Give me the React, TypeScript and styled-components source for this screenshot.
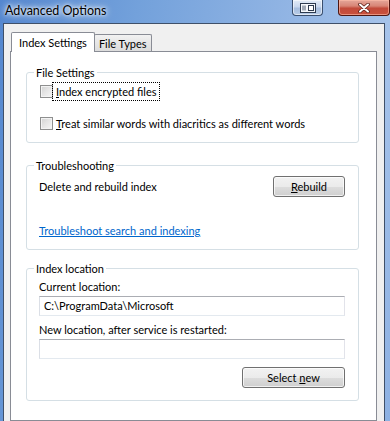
import React from "react";
import styled, { createGlobalStyle } from "styled-components";

const GlobalStyle = createGlobalStyle`
  html, body { margin: 0; padding: 0; overflow: hidden; }
  body {
    font-family: Lato, "Noto Sans", sans-serif;
    font-size: 11px;
    color: #000;
  }
`;

const Window = styled.div`
  width: 390px;
  height: 421px;
  overflow: hidden;
  display: flex;
  flex-direction: column;
  background: linear-gradient(100deg, #5487cf 0%, #73a1db 30%, #8fb3e3 60%, #a6c3ea 85%, #8cb0e2 100%);
`;

const TitleBar = styled.div`
  height: 23px;
  flex: none;
  display: flex;
  align-items: flex-start;
  padding-left: 5px;
`;

const Title = styled.div`
  flex: 1;
  line-height: 21px;
  font-size: 12.5px;
  color: #000;
  text-shadow: 0 0 6px #fff, 0 0 3px rgba(255, 255, 255, 0.9), 0 0 10px rgba(255, 255, 255, 0.7);
`;

const CaptionButtons = styled.div`
  display: flex;
  gap: 15px;
`;

const CaptionButton = styled.div<{ $close?: boolean }>`
  box-sizing: border-box;
  width: ${(p) => (p.$close ? 52 : 31)}px;
  height: 16px;
  display: flex;
  align-items: center;
  justify-content: center;
  border: 1px solid ${(p) => (p.$close ? "#4e1712" : "#3a4f6e")};
  border-top: none;
  border-radius: 0 0 4px 4px;
  background: ${(p) =>
    p.$close
      ? "linear-gradient(#e4a79a 0%, #d88576 40%, #c24a3a 55%, #c9513d 100%)"
      : "linear-gradient(#e2ebf7 0%, #c9d8ee 45%, #a8bfdf 55%, #b7cbe6 100%)"};
  box-shadow: inset 0 0 0 1px ${(p) => (p.$close ? "rgba(255,190,170,0.6)" : "rgba(255,255,255,0.55)")};
`;

const Client = styled.div`
  flex: 1;
  min-height: 0;
  margin: 0 5px 0 3px;
  border: 1px solid #3f5069;
  border-bottom: none;
  background: #f0f0f0;
  padding: 8px 0 0 6px;
  display: flex;
  flex-direction: column;
`;

const TabStrip = styled.div`
  display: flex;
  align-items: flex-end;
  height: 19px;
  padding-left: 1px;
  position: relative;
  z-index: 1;
`;

const Tab = styled.div<{ $active?: boolean }>`
  box-sizing: border-box;
  height: ${(p) => (p.$active ? 20 : 17)}px;
  margin-bottom: ${(p) => (p.$active ? -1 : 0)}px;
  margin-left: ${(p) => (p.$active ? 0 : -1)}px;
  padding: ${(p) => (p.$active ? "0 7px" : "0 4px")};
  border: 1px solid #898c95;
  border-bottom: none;
  border-radius: 2px 2px 0 0;
  background: ${(p) => (p.$active ? "#fff" : "linear-gradient(#f2f2f2, #e6e6e6 50%, #dcdcdc)")};
  line-height: ${(p) => (p.$active ? 20 : 17)}px;
  white-space: nowrap;
  position: relative;
  z-index: ${(p) => (p.$active ? 2 : 1)};
`;

const Panel = styled.div`
  box-sizing: border-box;
  width: 367px;
  flex: 1;
  border: 1px solid #898c95;
  background: #fff;
  padding: 0 17px 0 15px;
  display: flex;
  flex-direction: column;
`;

const Group = styled.div<{ $top: number; $height: number }>`
  box-sizing: border-box;
  position: relative;
  margin-top: ${(p) => p.$top}px;
  height: ${(p) => p.$height}px;
  border: 1px solid #d5dfe5;
  border-radius: 3px;
  display: flex;
  flex-direction: column;
`;

const Legend = styled.span`
  position: absolute;
  top: -8px;
  left: 7px;
  padding: 0 2px;
  background: #fff;
  line-height: 15px;
`;

const GroupBody = styled.div<{ $pt: number }>`
  padding: ${(p) => p.$pt}px 13px 0 12px;
  display: flex;
  flex-direction: column;
`;

const CheckRows = styled.div`
  display: flex;
  flex-direction: column;
  gap: 19px;
  padding: 12px 0 0 13px;
`;

const CheckRow = styled.div`
  display: flex;
  align-items: center;
  height: 13px;
  gap: 1px;
`;

const CheckBox = styled.span`
  box-sizing: border-box;
  flex: none;
  width: 13px;
  height: 13px;
  border: 1px solid #8e8f8f;
  background: linear-gradient(135deg, #d2d2d2 0%, #e6e6e6 50%, #f6f6f6 100%);
  box-shadow: inset 0 0 0 1px #f3f3f3;
`;

const CheckLabel = styled.span<{ $focused?: boolean }>`
  line-height: 13px;
  padding: 0 1px;
  outline: ${(p) => (p.$focused ? "1px dotted #000" : "none")};
  outline-offset: 1px;
  border: 1px solid transparent;
  white-space: nowrap;
`;

const Key = styled.span`
  text-decoration: underline;
`;

const ActionRow = styled.div`
  display: flex;
  align-items: center;
  justify-content: space-between;
  height: 21px;
`;

const Text = styled.span<{ $mt?: number }>`
  display: block;
  line-height: 15px;
  margin-top: ${(p) => p.$mt ?? 0}px;
  white-space: nowrap;
`;

const Link = styled.a<{ $mt: number }>`
  display: block;
  align-self: flex-start;
  margin-top: ${(p) => p.$mt}px;
  line-height: 15px;
  color: #0066cc;
  text-decoration: underline;
  cursor: pointer;
`;

const Button = styled.button<{ $width: number; $mt?: number }>`
  box-sizing: border-box;
  width: ${(p) => p.$width}px;
  height: 21px;
  margin-top: ${(p) => p.$mt ?? 0}px;
  padding: 0;
  border: 1px solid #707070;
  border-radius: 3px;
  background: linear-gradient(#f2f2f2 0%, #ebebeb 50%, #dddddd 51%, #cfcfcf 100%);
  box-shadow: inset 0 0 0 1px rgba(255, 255, 255, 0.7);
  font-family: inherit;
  font-size: 11px;
  color: #000;
  align-self: flex-end;
`;

const TextBox = styled.div<{ $mt: number }>`
  box-sizing: border-box;
  height: 20px;
  margin-top: ${(p) => p.$mt}px;
  border: 1px solid #abadb3;
  border-color: #abadb3 #e2e3ea #e3e9ef #dbdfe6;
  background: #fff;
  padding: 0 4px;
  line-height: 18px;
  white-space: nowrap;
`;

const MinIcon = () => (
  <svg width="16" height="10" viewBox="0 0 16 10">
    <rect x="0.5" y="0.5" width="15" height="9" fill="#f4f7fb" stroke="#2c3a4f" />
    <path d="M3 2.5v5M5 2.5v5" stroke="#4a5870" strokeWidth="1" />
    <rect x="8.5" y="2.5" width="5" height="5" fill="#fff" stroke="#2c3a4f" />
  </svg>
);

const CloseIcon = () => (
  <svg width="12" height="10" viewBox="0 0 12 10">
    <path d="M2 1.5L10 8.5M10 1.5L2 8.5" stroke="#5b2019" strokeWidth="3.6" strokeLinecap="round" />
    <path d="M2 1.5L10 8.5M10 1.5L2 8.5" stroke="#fff" strokeWidth="2" strokeLinecap="round" />
  </svg>
);

export default function App() {
  return (
    <>
      <GlobalStyle />
      <Window>
        <TitleBar>
          <Title>Advanced Options</Title>
          <CaptionButtons>
            <CaptionButton>
              <MinIcon />
            </CaptionButton>
            <CaptionButton $close>
              <CloseIcon />
            </CaptionButton>
          </CaptionButtons>
        </TitleBar>
        <Client>
          <TabStrip>
            <Tab $active>Index Settings</Tab>
            <Tab>File Types</Tab>
          </TabStrip>
          <Panel>
            <Group $top={20} $height={71}>
              <Legend>File Settings</Legend>
              <CheckRows>
                <CheckRow>
                  <CheckBox />
                  <CheckLabel $focused>
                    <Key>I</Key>ndex encrypted files
                  </CheckLabel>
                </CheckRow>
                <CheckRow>
                  <CheckBox />
                  <CheckLabel>
                    <Key>T</Key>reat similar words with diacritics as different words
                  </CheckLabel>
                </CheckRow>
              </CheckRows>
            </Group>

            <Group $top={22} $height={85}>
              <Legend>Troubleshooting</Legend>
              <GroupBody $pt={10}>
                <ActionRow>
                  <Text>Delete and rebuild index</Text>
                  <Button $width={72}>
                    <Key>R</Key>ebuild
                  </Button>
                </ActionRow>
                <Link $mt={26}>Troubleshoot search and indexing</Link>
              </GroupBody>
            </Group>

            <Group $top={18} $height={133}>
              <Legend>Index location</Legend>
              <GroupBody $pt={10}>
                <Text>Current location:</Text>
                <TextBox $mt={2}>C:\ProgramData\Microsoft</TextBox>
                <Text $mt={6}>New location, after service is restarted:</Text>
                <TextBox $mt={2} />
                <Button $width={103} $mt={8}>
                  Select <Key>n</Key>ew
                </Button>
              </GroupBody>
            </Group>
          </Panel>
        </Client>
      </Window>
    </>
  );
}
